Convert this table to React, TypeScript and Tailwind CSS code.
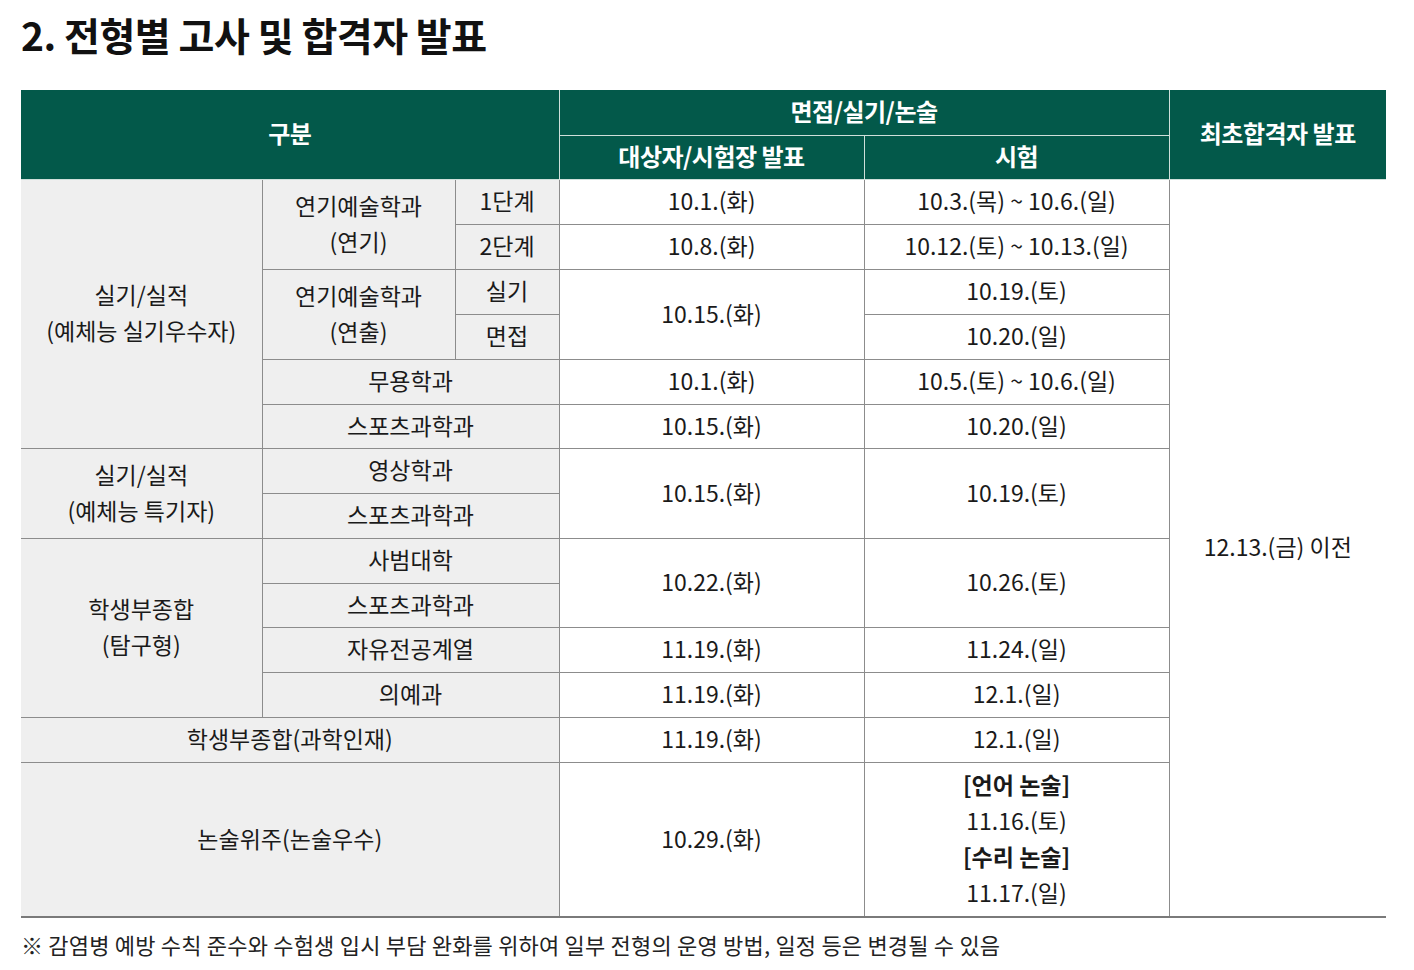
import React from 'react';

const font = { fontFamily: '"Noto Sans CJK KR", "Noto Sans", sans-serif' };

const th = 'bg-[#03594a] text-white font-bold text-[24px] tracking-[-0.5px] text-center align-middle border border-[#cfdfda] p-0 pb-[2px]';
const gray = 'bg-[#efefef] text-[23px] text-[#1a1a1a] text-center align-middle border border-[#8c8c8c] p-0 pb-[3px] leading-[36px]';
const white = 'bg-white text-[23px] text-[#1a1a1a] text-center align-middle border border-[#8c8c8c] p-0 pb-[3px] leading-[36px]';

const App: React.FC = () => {
  return (
    <div className="bg-white w-[1414px] h-[970px] pl-[21px] pr-[28px] pt-[10px]" style={font}>
      <h1 className="text-[39px] font-bold text-[#111] leading-[48px] tracking-[-0.5px] mb-[32px]">2. 전형별 고사 및 합격자 발표</h1>

      <table className="table-fixed border-collapse w-[1365px] border-hidden">
        <colgroup>
          <col className="w-[241px]" />
          <col className="w-[193px]" />
          <col className="w-[104px]" />
          <col className="w-[305px]" />
          <col className="w-[305px]" />
          <col className="w-[217px]" />
        </colgroup>
        <thead>
          <tr className="h-[45px]">
            <th colSpan={3} rowSpan={2} className={th}>구분</th>
            <th colSpan={2} className={th}>면접/실기/논술</th>
            <th rowSpan={2} className={th}>최초합격자 발표</th>
          </tr>
          <tr className="h-[44px]">
            <th className={th}>대상자/시험장 발표</th>
            <th className={th}>시험</th>
          </tr>
        </thead>
        <tbody>
          <tr className="h-[45px]">
            <td rowSpan={6} className={gray}>실기/실적<br />(예체능 실기우수자)</td>
            <td rowSpan={2} className={gray}>연기예술학과<br />(연기)</td>
            <td className={gray}>1단계</td>
            <td className={white}>10.1.(화)</td>
            <td className={white}>10.3.(목) ~ 10.6.(일)</td>
            <td rowSpan={14} className={white}>12.13.(금) 이전</td>
          </tr>
          <tr className="h-[45px]">
            <td className={gray}>2단계</td>
            <td className={white}>10.8.(화)</td>
            <td className={white}>10.12.(토) ~ 10.13.(일)</td>
          </tr>
          <tr className="h-[45px]">
            <td rowSpan={2} className={gray}>연기예술학과<br />(연출)</td>
            <td className={gray}>실기</td>
            <td rowSpan={2} className={white}>10.15.(화)</td>
            <td className={white}>10.19.(토)</td>
          </tr>
          <tr className="h-[45px]">
            <td className={gray}>면접</td>
            <td className={white}>10.20.(일)</td>
          </tr>
          <tr className="h-[45px]">
            <td colSpan={2} className={gray}>무용학과</td>
            <td className={white}>10.1.(화)</td>
            <td className={white}>10.5.(토) ~ 10.6.(일)</td>
          </tr>
          <tr className="h-[44px]">
            <td colSpan={2} className={gray}>스포츠과학과</td>
            <td className={white}>10.15.(화)</td>
            <td className={white}>10.20.(일)</td>
          </tr>
          <tr className="h-[45px]">
            <td rowSpan={2} className={gray}>실기/실적<br />(예체능 특기자)</td>
            <td colSpan={2} className={gray}>영상학과</td>
            <td rowSpan={2} className={white}>10.15.(화)</td>
            <td rowSpan={2} className={white}>10.19.(토)</td>
          </tr>
          <tr className="h-[45px]">
            <td colSpan={2} className={gray}>스포츠과학과</td>
          </tr>
          <tr className="h-[45px]">
            <td rowSpan={4} className={gray}>학생부종합<br />(탐구형)</td>
            <td colSpan={2} className={gray}>사범대학</td>
            <td rowSpan={2} className={white}>10.22.(화)</td>
            <td rowSpan={2} className={white}>10.26.(토)</td>
          </tr>
          <tr className="h-[44px]">
            <td colSpan={2} className={gray}>스포츠과학과</td>
          </tr>
          <tr className="h-[45px]">
            <td colSpan={2} className={gray}>자유전공계열</td>
            <td className={white}>11.19.(화)</td>
            <td className={white}>11.24.(일)</td>
          </tr>
          <tr className="h-[45px]">
            <td colSpan={2} className={gray}>의예과</td>
            <td className={white}>11.19.(화)</td>
            <td className={white}>12.1.(일)</td>
          </tr>
          <tr className="h-[45px]">
            <td colSpan={3} className={gray}>학생부종합(과학인재)</td>
            <td className={white}>11.19.(화)</td>
            <td className={white}>12.1.(일)</td>
          </tr>
          <tr className="h-[154px]">
            <td colSpan={3} className={gray}>논술위주(논술우수)</td>
            <td className={white}>10.29.(화)</td>
            <td className={white}>
              <div className="font-bold">[언어 논술]</div>
              <div>11.16.(토)</div>
              <div className="font-bold">[수리 논술]</div>
              <div>11.17.(일)</div>
            </td>
          </tr>
        </tbody>
      </table>
      <div className="h-[2px] w-[1365px] bg-[#7a7a7a]" />

      <p className="mt-[6px] text-[22px] text-[#222] leading-[40px] tracking-[0.2px]">
        ※ 감염병 예방 수칙 준수와 수험생 입시 부담 완화를 위하여 일부 전형의 운영 방법, 일정 등은 변경될 수 있음
      </p>
    </div>
  );
};

export default App;
